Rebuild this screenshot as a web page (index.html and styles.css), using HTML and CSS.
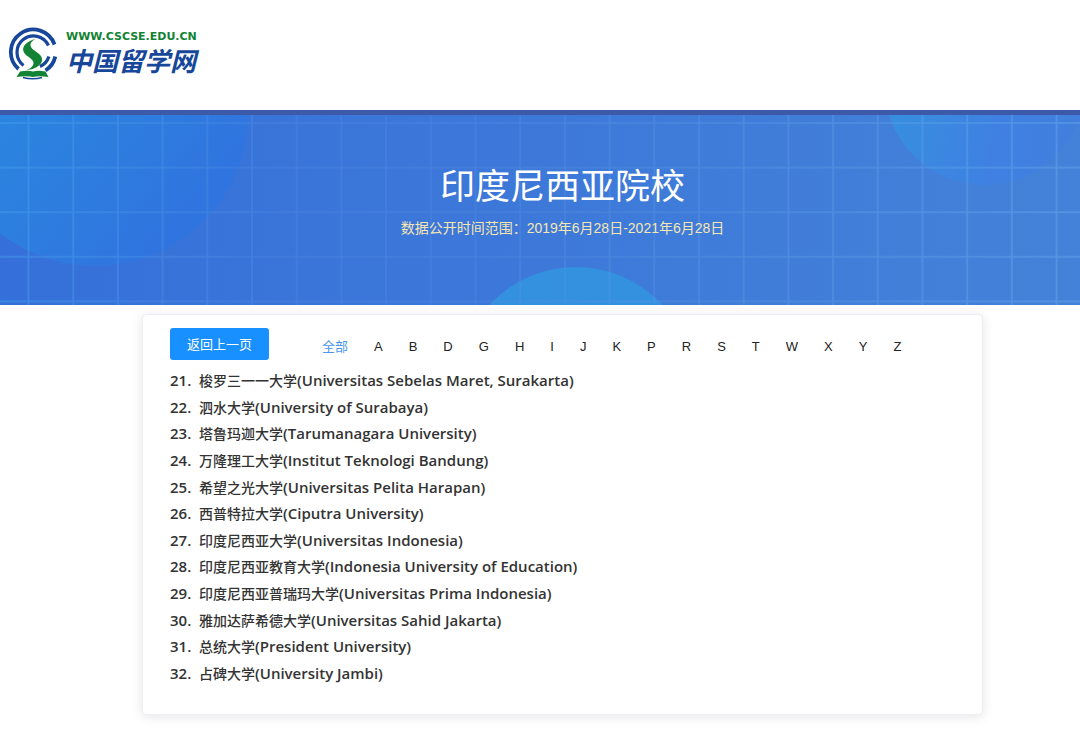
FILE: index.html
```html
<!DOCTYPE html>
<html lang="zh-CN">
<head>
<meta charset="utf-8">
<meta name="viewport" content="width=device-width, initial-scale=1">
<title>印度尼西亚院校 - 中国留学网</title>
<link rel="stylesheet" href="styles.css">
</head>
<body>
<header class="site-header">
  <a class="brand" href="#">
    <svg class="brand-mark" viewBox="0 0 50 54" aria-hidden="true">
      <g fill="none" stroke="#17479a">
        <path d="M46.500 18.500A22.500 22.500 0 1 0 10.500 43" stroke-width="3.800"/>
        <path d="M47.300 30.500A22.500 22.500 0 0 1 37.500 44.500" stroke-width="3.800"/>
        <path d="M40.500 19.500A16.500 16.500 0 1 0 15.500 39.500" stroke-width="3.200"/>
        <path d="M40.900 30.500A16.500 16.500 0 0 1 32 40.500" stroke-width="3.200"/>
        <path d="M15 51.500Q25 54 34 51.500" stroke-width="1.500"/>
      </g>
      <path d="M28.500 12.500C20 15 12.500 20 16 26.500C19 31.500 26 32.500 25.500 37.500C25 41 21.500 43 18.500 44C28 43.500 36.500 37.500 33.500 31C31 25.500 23.500 25 22.500 19.500C22.300 16.500 25 14 28.500 12.500Z" fill="#128334"/>
      <path d="M12 45.500Q20 44 25 45.500Q30 44 37.500 45.500L40.500 51Q31 49.500 25 51Q19 49.500 8.500 51Z" fill="#128334"/>
    </svg>
    <span class="brand-text">
      <span class="brand-url">WWW.CSCSE.EDU.CN</span>
      <span class="brand-name">中国留学网</span>
    </span>
  </a>
</header>

<section class="banner">
  <svg class="banner-art" viewBox="0 0 1080 190" preserveAspectRatio="xMidYMid slice" aria-hidden="true">
    <defs>
      <linearGradient id="base" x1="0" x2="1" y1="0" y2="0">
        <stop offset="0" stop-color="#3570da"/>
        <stop offset="0.350" stop-color="#3b76d9"/>
        <stop offset="1" stop-color="#4482d9"/>
      </linearGradient>
      <linearGradient id="left" gradientUnits="userSpaceOnUse" x1="0" y1="0" x2="160" y2="140">
        <stop offset="0" stop-color="#2b85df"/>
        <stop offset="1" stop-color="#3074df"/>
      </linearGradient>
      <linearGradient id="right" x1="0" x2="1" y1="0.500" y2="0.700">
        <stop offset="0" stop-color="#3690df"/>
        <stop offset="0.600" stop-color="#3f80e2"/>
        <stop offset="1" stop-color="#437fdc"/>
      </linearGradient>
      <linearGradient id="line" gradientUnits="userSpaceOnUse" x1="0" y1="0" x2="1080" y2="0">
        <stop offset="0" stop-color="#48a2ee" stop-opacity="0.550"/>
        <stop offset="0.250" stop-color="#5792e5" stop-opacity="0.350"/>
        <stop offset="0.450" stop-color="#5792e5" stop-opacity="0.350"/>
        <stop offset="1" stop-color="#68b0ef" stop-opacity="0.500"/>
      </linearGradient>
      <pattern id="grid" width="44.700" height="44.600" patternUnits="userSpaceOnUse" x="27.500" y="7">
        <path d="M0 1H45M1 0V45" fill="none" stroke="#fff" stroke-width="1.600"/>
      </pattern>
      <mask id="gridmask"><rect width="1080" height="190" fill="url(#grid)"/></mask>
    </defs>
    <rect width="1080" height="190" fill="url(#base)"/>
    <circle cx="95" cy="-3" r="154" fill="url(#left)"/>
    <circle cx="985" cy="-31" r="101" fill="url(#right)"/>
    <circle cx="576" cy="270" r="118" fill="#3391df"/>
    <rect width="1080" height="190" fill="url(#line)" mask="url(#gridmask)"/>
  </svg>
  <div class="banner-text">
    <h1 class="banner-title">印度尼西亚院校</h1>
    <p class="banner-range">数据公开时间范围：2019年6月28日-2021年6月28日</p>
  </div>
</section>

<main class="content">
  <section class="card">
    <div class="toolbar">
      <button class="back" type="button">返回上一页</button>
      <nav class="letters" aria-label="首字母">
        <a class="letter active" href="#">全部</a>
        <a class="letter" href="#">A</a>
        <a class="letter" href="#">B</a>
        <a class="letter" href="#">D</a>
        <a class="letter" href="#">G</a>
        <a class="letter" href="#">H</a>
        <a class="letter" href="#">I</a>
        <a class="letter" href="#">J</a>
        <a class="letter" href="#">K</a>
        <a class="letter" href="#">P</a>
        <a class="letter" href="#">R</a>
        <a class="letter" href="#">S</a>
        <a class="letter" href="#">T</a>
        <a class="letter" href="#">W</a>
        <a class="letter" href="#">X</a>
        <a class="letter" href="#">Y</a>
        <a class="letter" href="#">Z</a>
      </nav>
    </div>
    <ul class="schools">
      <li class="school"><span class="num">21.</span><span><span class="zh">梭罗三一一大学</span>(Universitas Sebelas Maret, Surakarta)</span></li>
      <li class="school"><span class="num">22.</span><span><span class="zh">泗水大学</span>(University of Surabaya)</span></li>
      <li class="school"><span class="num">23.</span><span><span class="zh">塔鲁玛迦大学</span>(Tarumanagara University)</span></li>
      <li class="school"><span class="num">24.</span><span><span class="zh">万隆理工大学</span>(Institut Teknologi Bandung)</span></li>
      <li class="school"><span class="num">25.</span><span><span class="zh">希望之光大学</span>(Universitas Pelita Harapan)</span></li>
      <li class="school"><span class="num">26.</span><span><span class="zh">西普特拉大学</span>(Ciputra University)</span></li>
      <li class="school"><span class="num">27.</span><span><span class="zh">印度尼西亚大学</span>(Universitas Indonesia)</span></li>
      <li class="school"><span class="num">28.</span><span><span class="zh">印度尼西亚教育大学</span>(Indonesia University of Education)</span></li>
      <li class="school"><span class="num">29.</span><span><span class="zh">印度尼西亚普瑞玛大学</span>(Universitas Prima Indonesia)</span></li>
      <li class="school"><span class="num">30.</span><span><span class="zh">雅加达萨希德大学</span>(Universitas Sahid Jakarta)</span></li>
      <li class="school"><span class="num">31.</span><span><span class="zh">总统大学</span>(President University)</span></li>
      <li class="school"><span class="num">32.</span><span><span class="zh">占碑大学</span>(University Jambi)</span></li>
    </ul>
  </section>
</main>
</body>
</html>
```
FILE: styles.css
```css
* {
  box-sizing: border-box;
}

body {
  margin: 0;
  background: #fff;
  color: #333;
  font-family: "Liberation Sans", "Noto Sans CJK SC", sans-serif;
  font-size: 14px;
}

.site-header {
  display: flex;
  align-items: flex-start;
  min-height: 110px;
  padding: 26px 8px 0;
}

.brand {
  display: flex;
  gap: 8px;
  text-decoration: none;
}

.brand-mark {
  width: 50px;
  height: 54px;
}

.brand-text {
  display: flex;
  flex-direction: column;
  padding-top: 3px;
}

.brand-url {
  color: #128334;
  font: bold 11px/16px "DejaVu Sans", sans-serif;
}

.brand-name {
  color: #17479a;
  font: bold italic 26px/30px "Noto Sans CJK SC", sans-serif;
}

.banner {
  position: relative;
  min-height: 195px;
  border-top: 5px solid #3d5aa9;
  padding-left: 45px;
  overflow: hidden;
  background: #3d78da;
}

.banner-art {
  position: absolute;
  inset: 0;
  width: 100%;
  height: 100%;
}

.banner-text {
  position: relative;
  padding-top: 46px;
  text-align: center;
}

.banner-title {
  margin: 0;
  color: #fff;
  font-size: 35px;
  font-weight: 400;
  line-height: 52px;
}

.banner-range {
  margin: 4px 0 0;
  color: #f5e6b3;
  line-height: 22px;
}

.content {
  padding: 9px 0 18px 45px;
}

.card {
  max-width: 841px;
  min-height: 401px;
  margin: 0 auto;
  padding: 13px 27px 28px;
  border: 1px solid #ebeef5;
  border-radius: 4px;
  background: #fff;
  box-shadow: 0 2px 12px rgba(0, 0, 0, 0.1);
}

.toolbar {
  display: flex;
  align-items: flex-start;
  gap: 53px;
}

.back {
  width: 99px;
  height: 32px;
  padding: 0;
  border: 0;
  border-radius: 3px;
  background: #1890ff;
  color: #fff;
  font: 13px/30px "Noto Sans CJK SC", sans-serif;
}

.letters {
  display: flex;
  flex-wrap: wrap;
  gap: 0 26px;
  padding-top: 8px;
}

.letter {
  color: #222;
  font-size: 13px;
  line-height: 22px;
  text-decoration: none;
}

.letter.active {
  color: #4a96e8;
}

.schools {
  display: flex;
  flex-direction: column;
  justify-content: space-between;
  min-height: 315px;
  margin: 9px 0 0;
  padding: 0;
  list-style: none;
}

.school {
  display: flex;
  align-items: baseline;
  font-family: "Open Sans", "Noto Sans CJK SC", sans-serif;
  font-size: 15px;
  font-weight: 600;
  line-height: 22px;
}

.num {
  width: 29px;
}

.zh {
  font-family: "Noto Sans CJK SC", sans-serif;
  font-size: 14px;
  font-weight: 500;
}
```
